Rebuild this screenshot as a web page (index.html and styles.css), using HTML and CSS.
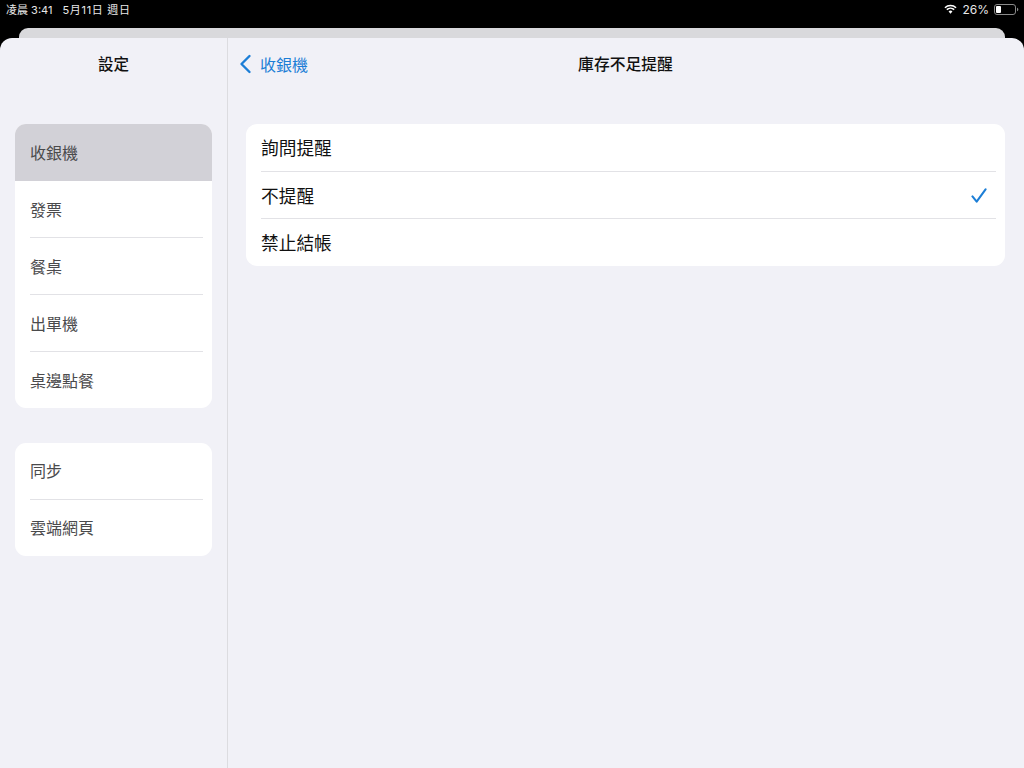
FILE: index.html
```html
<!DOCTYPE html>
<html lang="zh-Hant">
<head>
    <meta charset="UTF-8">
    <meta name="viewport" content="width=device-width, initial-scale=1.0">
    <title>庫存不足提醒</title>
    <link rel="stylesheet" href="styles.css">
</head>
<body>
<div class="status-bar">
    <div class="status-time">
        <span>凌晨 3:41</span>
        <span class="status-date">5月11日 週日</span>
    </div>
    <div class="status-icons">
        <svg class="wifi" width="13" height="10" viewBox="0 0 14 10">
            <path d="M7 10 4.9 7.7a3 3 0 0 1 4.2 0z" fill="#fff"/>
            <path d="M1 3.6a8.6 8.6 0 0 1 12 0M3 5.7a5.8 5.8 0 0 1 8 0" fill="none" stroke="#fff" stroke-width="1.6"/>
        </svg>
        <span class="battery-level">26%</span>
        <svg class="battery" width="25" height="11" viewBox="0 0 25 11">
            <rect x="0.5" y="0.5" width="21" height="10" rx="2.5" fill="none" stroke="#8a8a8a"/>
            <rect x="2" y="2" width="5" height="7" rx="1" fill="#fff"/>
            <path d="M23 3.8c.9.3 1.3 1 1.3 1.7s-.4 1.4-1.3 1.7z" fill="#8a8a8a"/>
        </svg>
    </div>
</div>
<div class="back-sheet"></div>
<div class="sheet">
    <div class="sidebar">
        <div class="sidebar-title">設定</div>
        <div class="side-group main-group">
            <div class="side-row selected">收銀機</div>
            <div class="side-row">發票</div>
            <div class="side-row">餐桌</div>
            <div class="side-row">出單機</div>
            <div class="side-row">桌邊點餐</div>
        </div>
        <div class="side-group">
            <div class="side-row">同步</div>
            <div class="side-row">雲端網頁</div>
        </div>
    </div>
    <div class="content">
        <div class="nav-bar">
            <div class="back-link">
                <svg width="13" height="20" viewBox="0 0 13 20">
                    <path d="M10.5 2 2.5 10l8 8" fill="none" stroke="#1c7ed6" stroke-width="2.4" stroke-linecap="round" stroke-linejoin="round"/>
                </svg>
                <span>收銀機</span>
            </div>
            <div class="nav-title">庫存不足提醒</div>
        </div>
        <div class="option-card">
            <div class="option-row">詢問提醒</div>
            <div class="option-row">
                <span>不提醒</span>
                <svg width="16" height="15" viewBox="0 0 17 16">
                    <path d="M1.5 9 6 14.5 15.5 1.5" fill="none" stroke="#1c7ed6" stroke-width="2.2" stroke-linecap="round" stroke-linejoin="round"/>
                </svg>
            </div>
            <div class="option-row">禁止結帳</div>
        </div>
    </div>
</div>
</body>
</html>
```

FILE: styles.css
```css
* {
    box-sizing: border-box;
}
html,
body {
    height: 100%;
}
body {
    margin: 0;
    background-color: #000;
    font-family: "Inter", "Noto Sans CJK TC", sans-serif;
    overflow: hidden;
}
.status-bar {
    display: flex;
    justify-content: space-between;
    align-items: center;
    height: 28px;
    padding: 0 5px 10px 6px;
    color: #e8e8e8;
    font-size: 11px;
}
.status-time {
    display: flex;
    gap: 10px;
}
.status-date {
    letter-spacing: 0.7px;
}
.status-icons {
    display: flex;
    align-items: center;
    gap: 5px;
}
.battery-level {
    font-size: 12px;
}
.back-sheet {
    height: 10px;
    margin: 0 19px;
    background-color: #d9d9dc;
    border-radius: 9px 9px 0 0;
}
.sheet {
    display: flex;
    height: 730px;
    background-color: #f1f1f7;
    border-radius: 12px 12px 0 0;
}
.sidebar {
    width: 228px;
    padding: 0 15px;
    border-right: 1px solid #dcdce0;
}
.sidebar-title {
    height: 86px;
    padding-top: 16px;
    text-align: center;
    font-size: 15.5px;
    line-height: 22px;
    font-weight: 500;
    color: #111;
}
.side-group {
    width: 197px;
    margin-bottom: 35px;
    background-color: #fff;
    border-radius: 11px;
    overflow: hidden;
    padding-left: 15px;
    padding-right: 9px;
}
.side-row {
    height: 57px;
    border-bottom: 1px solid #e2e2e6;
    font-size: 16px;
    line-height: 56px;
    color: #4a4a4c;
}
.side-row:last-child {
    height: 56px;
    border-bottom: none;
}
.main-group .side-row {
    line-height: 58px;
}
.side-row.selected {
    margin: 0 -9px 0 -15px;
    padding-left: 15px;
    border-bottom: none;
    background-color: #d2d1d7;
}
.content {
    flex: 1;
    padding: 0 19px 0 18px;
}
.nav-bar {
    display: flex;
    justify-content: center;
    position: relative;
    height: 86px;
    padding-top: 16px;
}
.nav-title {
    font-size: 15.8px;
    line-height: 22px;
    font-weight: 500;
    color: #111;
}
.back-link {
    display: flex;
    align-items: center;
    gap: 8px;
    position: absolute;
    left: -7px;
    top: 15px;
    height: 22px;
    font-size: 16px;
    color: #1c7ed6;
}
.option-card {
    background-color: #fff;
    border-radius: 11px;
    padding-left: 15px;
    padding-right: 9px;
}
.option-row {
    display: flex;
    justify-content: space-between;
    align-items: center;
    height: 47px;
    padding-right: 9px;
    border-top: 1px solid #e2e2e6;
    font-size: 17.7px;
    color: #111;
}
.option-row:first-child {
    padding-bottom: 1px;
    border-top: none;
}
.option-row:last-child {
    height: 48px;
    padding-bottom: 2px;
}
```
